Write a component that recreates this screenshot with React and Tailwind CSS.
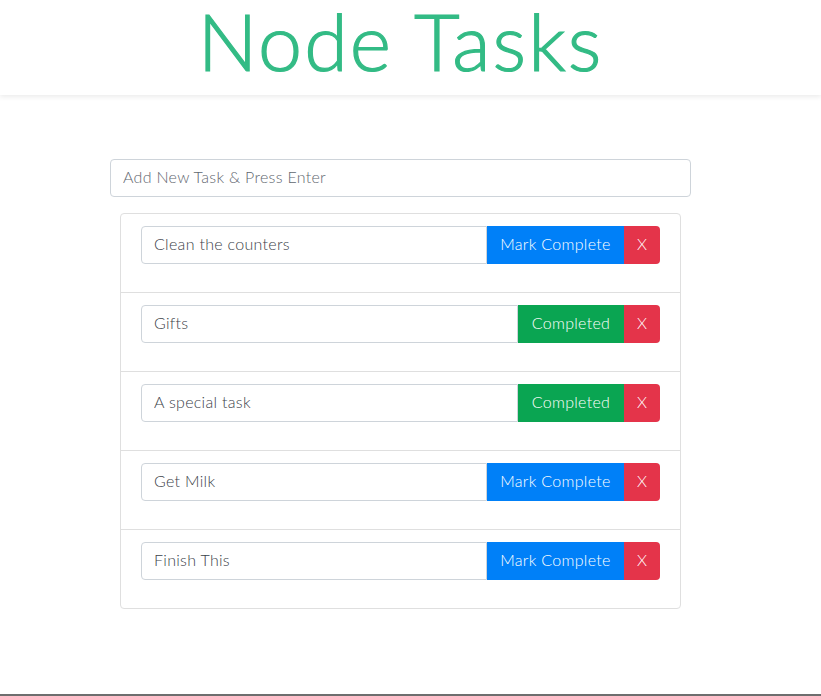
import React from 'react';

const tasks = [
  { name: 'Clean the counters', done: false },
  { name: 'Gifts', done: true },
  { name: 'A special task', done: true },
  { name: 'Get Milk', done: false },
  { name: 'Finish This', done: false },
];

function TaskRow({ task, last }) {
  return (
    <li className={`px-5 pt-3 pb-[28px] ${last ? '' : 'border-b border-[#dfdfdf]'}`}>
      <div className="flex h-[38px]">
        <input
          readOnly
          value={task.name}
          className="flex-1 min-w-0 h-full px-3 pb-[3px] text-[16px] tracking-[0.3px] text-[#3b4249] bg-white border border-[#ced4da] rounded-l-[4px] outline-none"
        />
        {task.done ? (
          <button className="w-[106px] h-full pb-[3px] bg-[#0aa552] text-white text-[16px] tracking-[0.3px]">Completed</button>
        ) : (
          <button className="w-[137px] h-full pb-[3px] bg-[#0080f8] text-white text-[16px] tracking-[0.3px]">Mark Complete</button>
        )}
        <button className="w-[36px] h-full pb-[3px] bg-[#e4344a] text-white text-[16px] rounded-r-[4px]">X</button>
      </div>
    </li>
  );
}

export default function App() {
  return (
    <div className="h-[696px] flex flex-col bg-white font-['Lato','Noto_Sans',sans-serif] font-light">
      <header className="h-[95px] bg-white shadow-[0_2px_5px_rgba(0,0,0,0.08)] relative z-10">
        <h1 className="text-center text-[79px] leading-[80px] pt-[1px] pr-[20px] tracking-[2px] text-[#33bb85] font-light [-webkit-text-stroke:1.2px_#33bb85]">
          Node Tasks
        </h1>
      </header>

      <main className="ml-[110px] w-[581px] mt-[64px]">
        <input
          placeholder="Add New Task & Press Enter"
          className="w-full h-[38px] px-3 pb-[3px] text-[16px] tracking-[0.3px] text-[#3b4249] placeholder:text-[#5f676f] border border-[#ced4da] rounded-[4px] outline-none"
        />
        <ul className="mt-4 mx-[10px] border border-[#dfdfdf] rounded-[4px]">
          {tasks.map((t, i) => (
            <TaskRow key={t.name} task={t} last={i === tasks.length - 1} />
          ))}
        </ul>
      </main>

      <div className="flex-1" />
      <div className="h-[2px] bg-[#6e6e6e]" />
    </div>
  );
}
